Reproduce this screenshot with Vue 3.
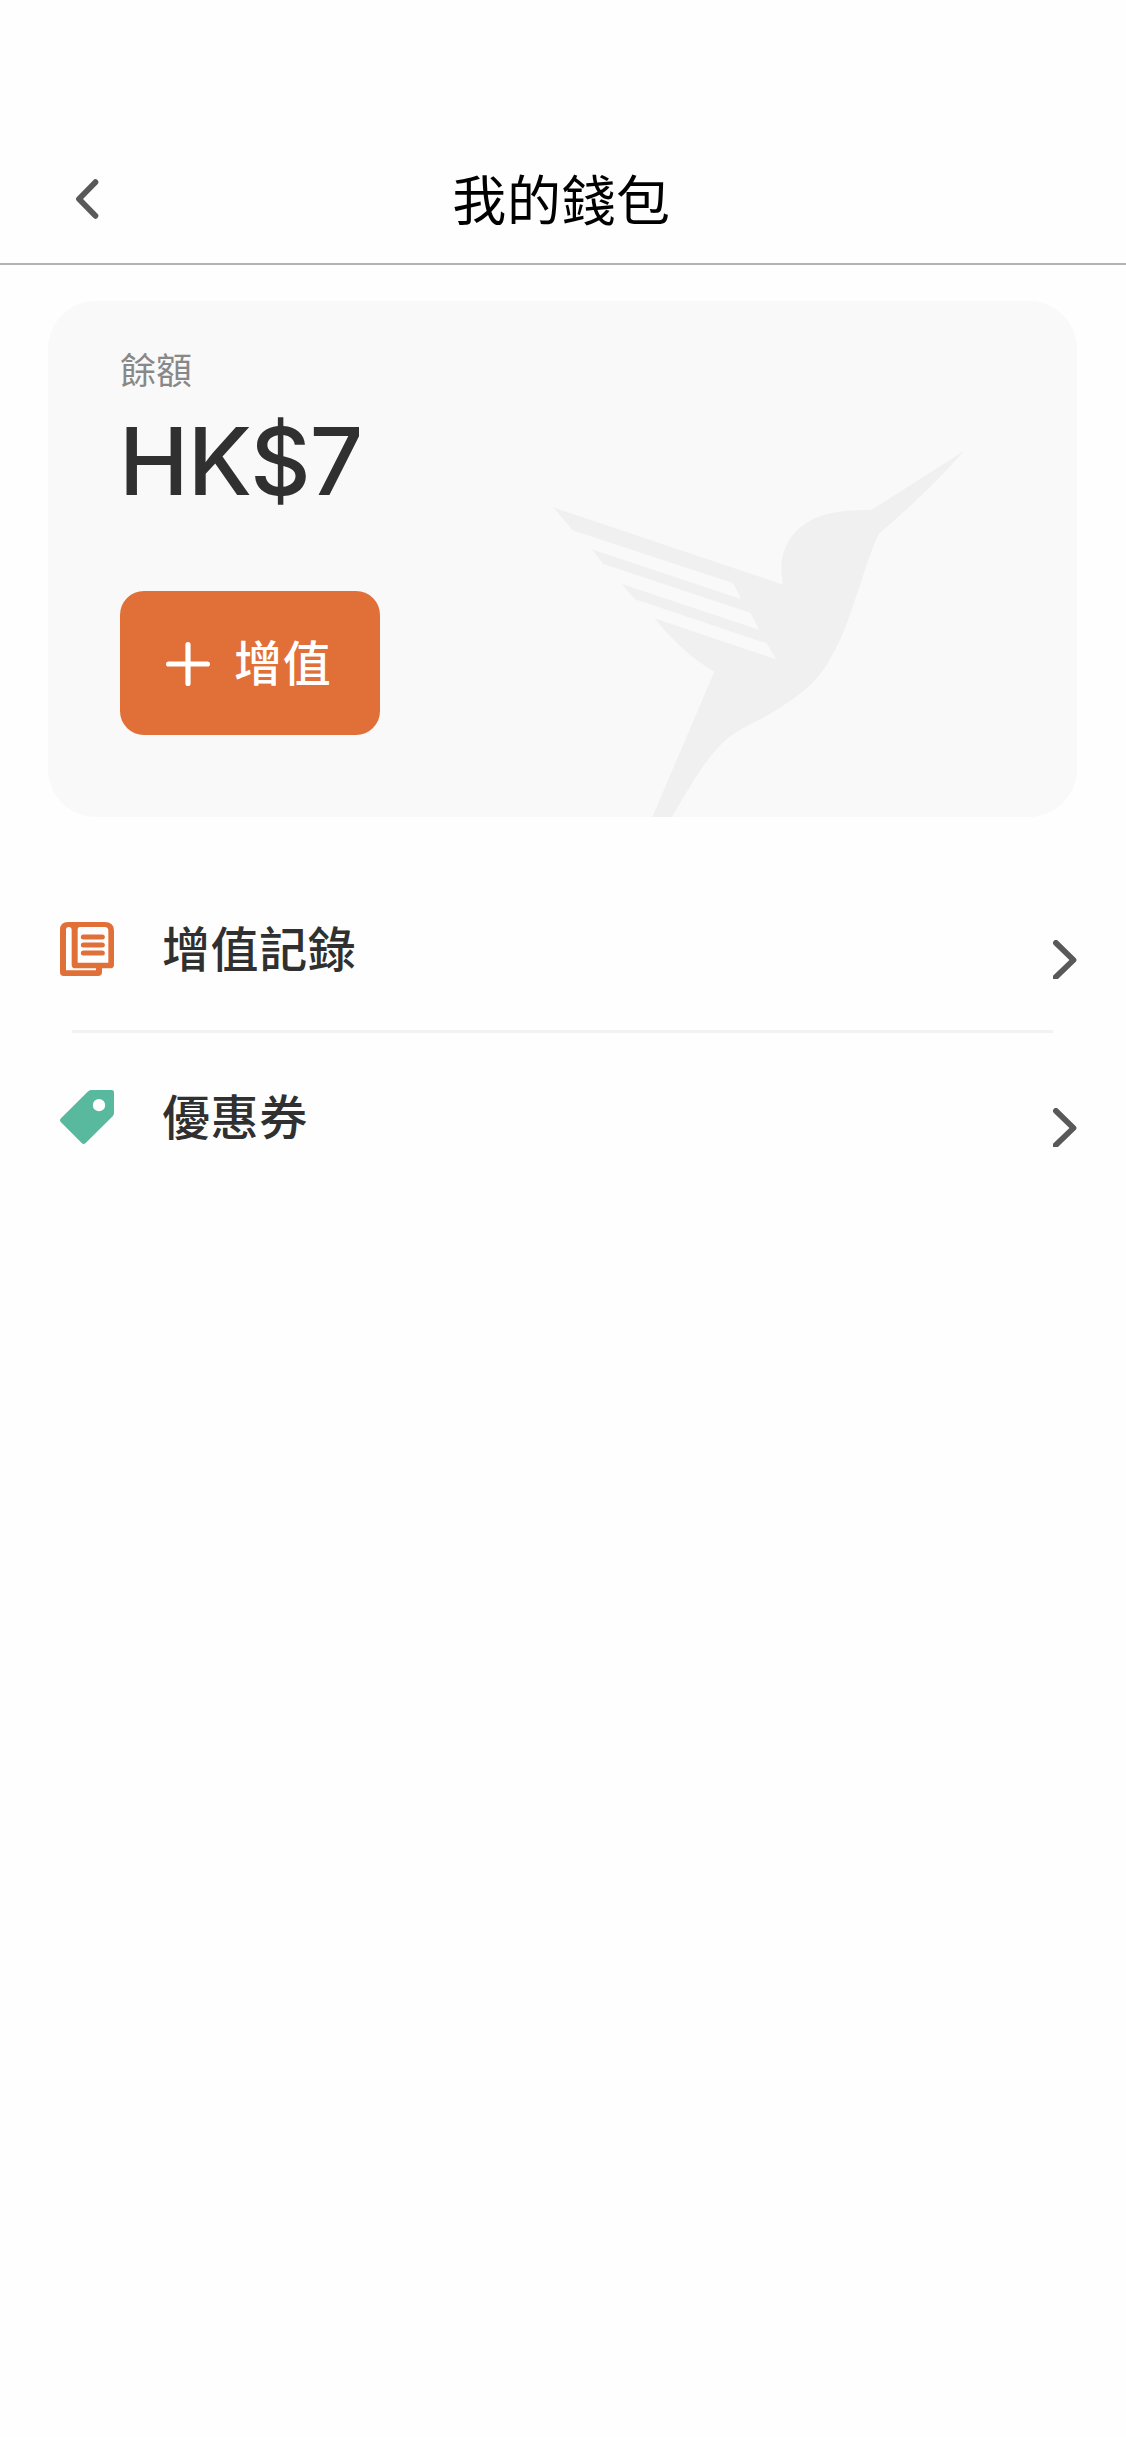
<script setup>
const rows = [
  { id: 'records', label: '增值記錄' },
  { id: 'coupons', label: '優惠券' },
]
</script>

<template>
  <main class="wallet">
    <header class="header">
      <svg class="back" width="24" height="40" viewBox="0 0 24 40">
        <path d="M20.4 3.2 4 20 20.4 36.8" />
      </svg>
      <h1 class="title">我的錢包</h1>
    </header>

    <section class="card">
      <svg class="bird" width="440" height="387" viewBox="0 0 1320 1161">
        <path
          d="M40 232 729 464C715 390 732 345 768 304C820 254 880 240 994 240L1273 62C1200 145 1110 232 1017 311C1000 342 985 390 965 450C935 540 910 620 878 672C840 755 770 805 680 857C630 885 590 900 560 928C500 980 450 1068 396 1161H337L523 725C460 690 400 635 343 565L708 688 680 640 285 508Q265 488 246 462L657 599 632 549 190 402 155 358 604 508 580 460 98 301Z"
        />
      </svg>
      <div class="label">餘額</div>
      <div class="amount">HK$7</div>
      <button class="topup" type="button">
        <svg class="plus" width="44" height="44" viewBox="0 0 44 44">
          <path d="M22 2.6V41.4M2.6 22H41.4" />
        </svg>
        <span class="topup-text">增值</span>
      </button>
    </section>

    <nav class="list">
      <div v-for="row in rows" :key="row.id" class="row">
        <svg v-if="row.id === 'records'" class="icon" width="54" height="54" viewBox="0 0 162 162">
          <path
            fill="#e06f38"
            fill-rule="evenodd"
            d="M24 0H134Q162 0 162 26V128Q162 139 150 139H126V150Q126 162 114 162H11Q0 162 0 151V24Q0 0 24 0ZM53 22Q53 15 60 15H134Q145 15 145 26V122H53ZM18 25Q18 15 26 15Q35 15 35 25V128Q35 139 46 139H108V145H18Z"
          />
          <path d="M70 45H127M70 69H127M70 93H127" stroke="#e06f38" stroke-width="15" stroke-linecap="round" />
        </svg>
        <svg v-else class="icon" width="54" height="54" viewBox="0 0 162 162">
          <path
            fill="#59b99f"
            fill-rule="evenodd"
            d="M93 0H155Q162 0 162 7V70Q162 75 158 79L77 159Q71 165 65 159L3 97Q-3 91 3 85L83 5Q88 0 93 0ZM117 27A18.500 18.500 0 1 0 117 64A18.500 18.500 0 1 0 117 27Z"
          />
        </svg>
        <span class="row-label">{{ row.label }}</span>
        <svg class="chevron" width="24" height="39" viewBox="0 0 24 39">
          <path d="M2.900 2.900 20.500 20 2.500 37.300" />
        </svg>
      </div>
    </nav>
  </main>
</template>

<style>
body {
  margin: 0;
  background: #fefefe;
}
</style>

<style scoped>
.wallet {
  min-height: 2437px;
  background: #fefefe;
  font-family: Inter, "Noto Sans CJK TC", sans-serif;
  color: #303030;
}

.header {
  display: grid;
  grid-template-columns: 100px 1fr 103px;
  align-items: center;
  height: 265px;
  box-sizing: border-box;
  padding-top: 132px;
  border-bottom: 2px solid #b3b3b3;
}

.back {
  justify-self: end;
  margin-top: 3px;
  margin-right: 1px;
}

.back path,
.chevron path {
  fill: none;
  stroke: #595959;
  stroke-width: 5.800;
  stroke-linecap: round;
  stroke-linejoin: round;
}

.title {
  margin: 0;
  font: 400 54px/80px "Noto Sans CJK TC", sans-serif;
  letter-spacing: 0.600px;
  text-align: center;
  color: #000;
}

.card {
  position: relative;
  box-sizing: border-box;
  height: 516px;
  margin: 36px 49px 0 48px;
  padding: 42px 72px 0;
  border-radius: 48px;
  background: #f9f9f9;
  overflow: hidden;
}

.bird {
  position: absolute;
  left: 492px;
  bottom: 0;
  fill: #f0f0f0;
}

.label {
  font: 400 36px/50px "Noto Sans CJK TC", sans-serif;
  color: #888;
}

.amount {
  margin-left: -1px;
  font-size: 93.500px;
  font-weight: 500;
  line-height: 136px;
  letter-spacing: -0.900px;
}

.topup {
  display: flex;
  align-items: center;
  width: 260px;
  height: 144px;
  margin-top: 62px;
  padding: 0 0 0 46px;
  border: 0;
  border-radius: 24px;
  background: #e06f38;
  color: #fff;
}

.plus {
  margin-top: 2px;
}

.plus path {
  stroke: #fff;
  stroke-width: 5.200;
  stroke-linecap: round;
}

.topup-text {
  margin: -6px 0 0 24px;
  font: 500 48px/70px "Noto Sans CJK TC", sans-serif;
  letter-spacing: 0.700px;
}

.list {
  padding-top: 48px;
}

.row {
  position: relative;
  display: flex;
  align-items: center;
  height: 165px;
  padding: 0 49px 0 60px;
}

.row + .row {
  margin-top: 3px;
}

.row + .row::before {
  content: "";
  position: absolute;
  top: -3px;
  left: 72px;
  right: 73px;
  height: 3px;
  background: #f2f2f2;
}

.icon {
  margin-top: 3px;
}

.row-label {
  flex: 1;
  margin: -3px 0 0 48px;
  font: 500 48px/70px "Noto Sans CJK TC", sans-serif;
  letter-spacing: 0.600px;
}

.chevron {
  margin-top: 24px;
}
</style>
